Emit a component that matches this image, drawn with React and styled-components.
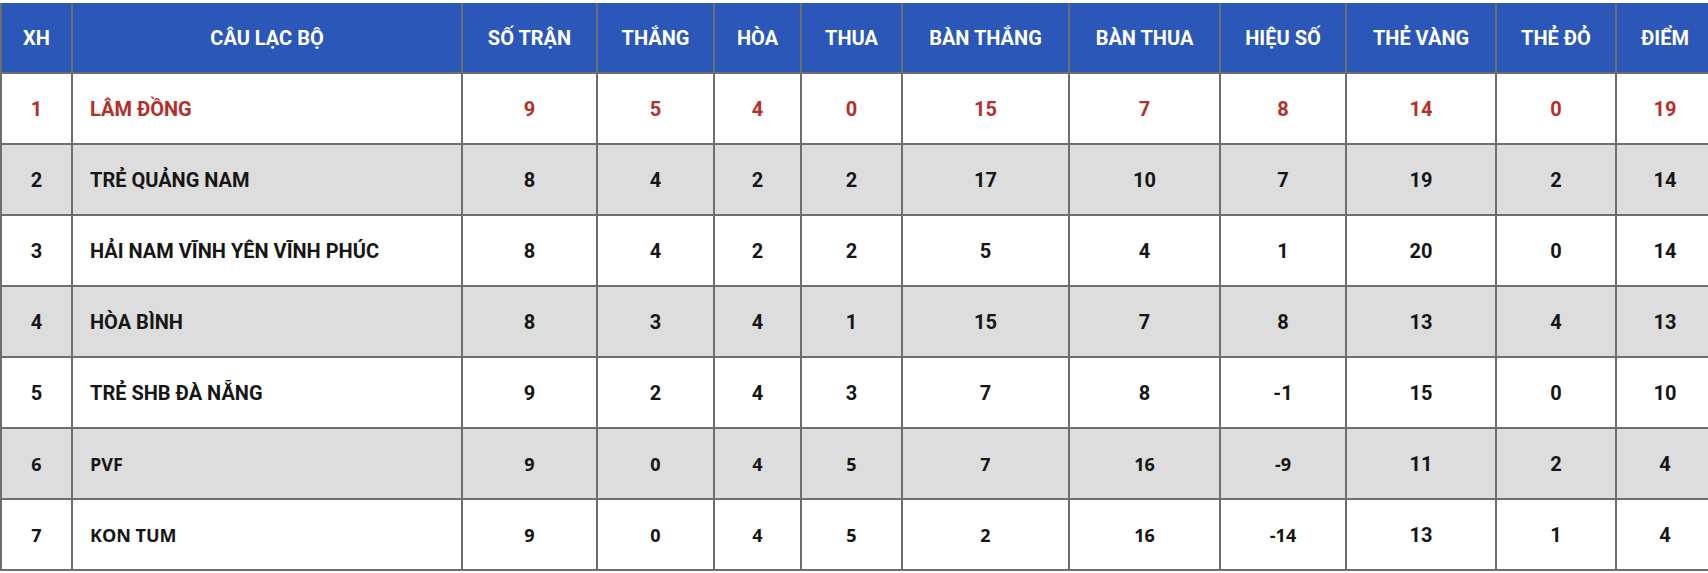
import React from 'react';
import styled, { createGlobalStyle } from 'styled-components';

const GlobalStyle = createGlobalStyle`
  body {
    margin: 0;
    background: #ffffff;
    overflow: hidden;
    font-family: Roboto, "Noto Sans", sans-serif;
  }
`;

const Wrapper = styled.div`
  padding-top: 3px;
  width: 1712px;
`;

const Table = styled.table`
  width: 1712px;
  border-collapse: collapse;
  table-layout: fixed;
`;

const HeadCell = styled.th`
  height: 69px;
  padding: 0;
  background: #2b57b8;
  color: #ffffff;
  font-family: Roboto, sans-serif;
  font-weight: 700;
  font-size: 20px;
  text-align: center;
  border-left: 2px solid #6e6e6e;
  border-right: 2px solid #6e6e6e;
  border-top: none;
  border-bottom: none;
`;

const Row = styled.tr`
  height: 71px;
  background: ${p => (p.$shaded ? '#dddddd' : '#ffffff')};
`;

const Cell = styled.td`
  padding: 0;
  border: 2px solid #6e6e6e;
  text-align: ${p => (p.$left ? 'left' : 'center')};
  padding-left: ${p => (p.$left ? '17px' : '0')};
  font-family: ${p => (p.$alt ? '"Open Sans", sans-serif' : 'Roboto, sans-serif')};
  font-weight: 700;
  font-size: ${p => (p.$alt ? '18px' : '20px')};
  color: ${p => (p.$top ? '#b52f2b' : '#161616')};
`;

const columns = [
  { label: 'XH', width: 71 },
  { label: 'CÂU LẠC BỘ', width: 390 },
  { label: 'SỐ TRẬN', width: 135 },
  { label: 'THẮNG', width: 117 },
  { label: 'HÒA', width: 87 },
  { label: 'THUA', width: 101 },
  { label: 'BÀN THẮNG', width: 167 },
  { label: 'BÀN THUA', width: 151 },
  { label: 'HIỆU SỐ', width: 126 },
  { label: 'THẺ VÀNG', width: 150 },
  { label: 'THẺ ĐỎ', width: 120 },
  { label: 'ĐIỂM', width: 98 },
];

const teams = [
  [1, 'LÂM ĐỒNG', 9, 5, 4, 0, 15, 7, 8, 14, 0, 19],
  [2, 'TRẺ QUẢNG NAM', 8, 4, 2, 2, 17, 10, 7, 19, 2, 14],
  [3, 'HẢI NAM VĨNH YÊN VĨNH PHÚC', 8, 4, 2, 2, 5, 4, 1, 20, 0, 14],
  [4, 'HÒA BÌNH', 8, 3, 4, 1, 15, 7, 8, 13, 4, 13],
  [5, 'TRẺ SHB ĐÀ NẴNG', 9, 2, 4, 3, 7, 8, -1, 15, 0, 10],
  [6, 'PVF', 9, 0, 4, 5, 7, 16, -9, 11, 2, 4],
  [7, 'KON TUM', 9, 0, 4, 5, 2, 16, -14, 13, 1, 4],
];

export default function App() {
  return (
    <Wrapper>
      <GlobalStyle />
      <Table>
        <colgroup>
          {columns.map(c => (
            <col key={c.label} style={{ width: c.width }} />
          ))}
        </colgroup>
        <thead>
          <tr>
            {columns.map(c => (
              <HeadCell key={c.label}>{c.label}</HeadCell>
            ))}
          </tr>
        </thead>
        <tbody>
          {teams.map((team, i) => (
            <Row key={team[0]} $shaded={i % 2 === 1}>
              {team.map((value, j) => (
                <Cell
                  key={j}
                  $left={j === 1}
                  $top={i === 0}
                  $alt={i >= 5 && j < 9}
                >
                  {value}
                </Cell>
              ))}
            </Row>
          ))}
        </tbody>
      </Table>
    </Wrapper>
  );
}
